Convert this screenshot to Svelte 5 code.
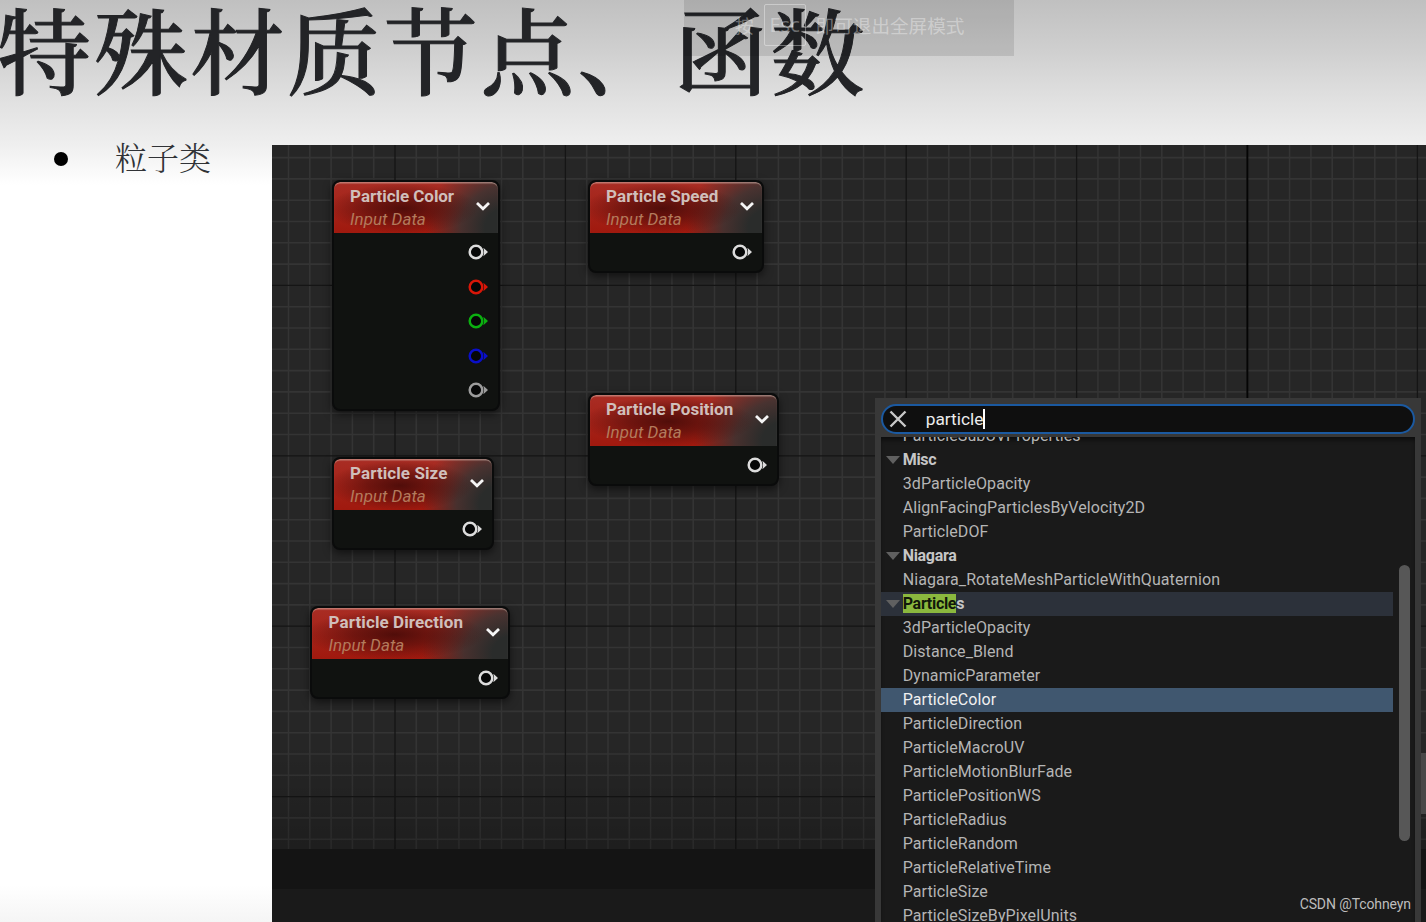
<script lang="ts">
	interface GraphNode {
		title: string;
		x: number;
		y: number;
		width: number;
		spacing: number;
		pins: string[];
	}

	interface Row {
		label: string;
		group?: boolean;
		match?: string;
		selected?: boolean;
	}

	const nodes: GraphNode[] = [
		{ title: 'Particle Color', x: 60, y: 35, width: 168, spacing: -0.05, pins: ['#dcdcdc', '#d81608', '#0bb010', '#0a0fc8', '#9c9c9c'] },
		{ title: 'Particle Speed', x: 316, y: 35, width: 176, spacing: 0.05, pins: ['#dcdcdc'] },
		{ title: 'Particle Position', x: 316, y: 248, width: 191, spacing: 0.03, pins: ['#dcdcdc'] },
		{ title: 'Particle Size', x: 60, y: 312, width: 162, spacing: 0.08, pins: ['#dcdcdc'] },
		{ title: 'Particle Direction', x: 38.5, y: 461, width: 199.5, spacing: 0.1, pins: ['#dcdcdc'] }
	];

	const rows: Row[] = [
		{ label: 'ParticleSubUVProperties' },
		{ label: 'Misc', group: true },
		{ label: '3dParticleOpacity' },
		{ label: 'AlignFacingParticlesByVelocity2D' },
		{ label: 'ParticleDOF' },
		{ label: 'Niagara', group: true },
		{ label: 'Niagara_RotateMeshParticleWithQuaternion' },
		{ label: 's', group: true, match: 'Particle' },
		{ label: '3dParticleOpacity' },
		{ label: 'Distance_Blend' },
		{ label: 'DynamicParameter' },
		{ label: 'ParticleColor', selected: true },
		{ label: 'ParticleDirection' },
		{ label: 'ParticleMacroUV' },
		{ label: 'ParticleMotionBlurFade' },
		{ label: 'ParticlePositionWS' },
		{ label: 'ParticleRadius' },
		{ label: 'ParticleRandom' },
		{ label: 'ParticleRelativeTime' },
		{ label: 'ParticleSize' },
		{ label: 'ParticleSizeByPixelUnits' }
	];

	// grid line positions inside the graph, every eighth line is a major one
	const step = 21.3;
	const cols = Array.from({ length: 54 }, (_, i) => ({ at: 16.5 + i * step, major: i % 8 === 5 }));
	const lines = Array.from({ length: 33 }, (_, i) => ({ at: 12.6 + i * step, major: i % 8 === 6 }));
</script>

<main class="slide">
	<h1>特殊材质节点、函数</h1>
	<div class="hint">
		<span>按</span>
		<kbd>Esc</kbd>
		<span>即可退出全屏模式</span>
	</div>

	<div class="body">
		<ul>
			<li><span>粒子类</span></li>
		</ul>

		<section class="editor">
			<div class="graph">
				<svg class="grid" width="1155" height="704" aria-hidden="true">
					{#each cols as c}
						{#if !c.major}<path d="M{c.at} 0V704" />{/if}
					{/each}
					{#each lines as l}
						{#if !l.major}<path d="M0 {l.at}H1155" />{/if}
					{/each}
					{#each cols as c}
						{#if c.major}<path class="major" d="M{c.at} 0V704" />{/if}
					{/each}
					{#each lines as l}
						{#if l.major}<path class="major" d="M0 {l.at}H1155" />{/if}
					{/each}
					<path class="axis" d="M975.5 0V704" />
				</svg>
				<div class="shade"></div>

				{#each nodes as node}
					<article class="node" style="left: {node.x}px; top: {node.y}px; width: {node.width}px">
						<header>
							<div class="titles">
								<h2 style="letter-spacing: {node.spacing}px">{node.title}</h2>
								<p>Input Data</p>
							</div>
							<svg class="chevron" width="16" height="12" viewBox="0 0 16 12" aria-hidden="true">
								<path d="M2 3 8 8.7 14 3" />
							</svg>
						</header>
						<div class="pins">
							{#each node.pins as color}
								<svg width="20" height="16" viewBox="0 0 20 16" aria-hidden="true">
									<circle cx="8" cy="8" r="6.3" fill="#060707" stroke={color} stroke-width="2.5" />
									<path d="M15.4 3.8 20 8l-4.6 4.2q1.2-4.2 0-8.4Z" fill={color} />
								</svg>
							{/each}
						</div>
					</article>
				{/each}
			</div>
			<div class="strip"></div>
			<div class="edge-button"></div>

			<div class="menu">
				<div class="search">
					<svg width="18" height="18" viewBox="0 0 18 18" aria-hidden="true">
						<path d="M1.5 1.5l15 15M16.5 1.5l-15 15" />
					</svg>
					<span class="query">particle</span>
					<i class="caret"></i>
				</div>
				<div class="list">
					<div class="rows">
						{#each rows as row}
							<div class="row" class:group={row.group} class:hovered={row.match} class:selected={row.selected}>
								<span class="arrow">
									{#if row.group}
										<svg width="14" height="8" viewBox="0 0 14 8" aria-hidden="true"><path d="M0 0h14L7 8Z" /></svg>
									{/if}
								</span>
								<span>{#if row.match}<mark>{row.match}</mark>{/if}{row.label}</span>
							</div>
						{/each}
					</div>
					<div class="scrollbar"></div>
				</div>
			</div>
		</section>
	</div>

	<div class="watermark">CSDN @Tcohneyn</div>
</main>

<style>
	:global(body) {
		background: #fff;
	}

	.slide {
		position: relative;
		width: 1426px;
		height: 922px;
		overflow: hidden;
		background: linear-gradient(#c0c0c0 0, #cfcfcf 50px, #dfdfdf 95px, #efefef 145px, #fff 185px, #fff 885px, #f5f5f5 922px);
		font-family: Roboto, 'Noto Sans CJK SC', sans-serif;
	}

	h1 {
		height: 145px;
		margin: 0 0 0 -3px;
		color: #232427;
		font: 500 94px/96px 'Noto Serif CJK SC', 'Noto Sans CJK SC', serif;
		letter-spacing: 2.7px;
		white-space: nowrap;
		-webkit-text-stroke: 1px #232427;
	}

	.hint {
		position: absolute;
		left: 684px;
		top: 0;
		display: flex;
		align-items: center;
		gap: 10px;
		width: 279px;
		height: 50px;
		padding: 0 0 6px 51px;
		background: rgba(0, 0, 0, 0.1);
		color: rgba(255, 255, 255, 0.36);
		font-size: 18.6px;
		white-space: nowrap;
	}

	.hint span {
		margin-top: -2px;
	}

	kbd {
		box-sizing: border-box;
		width: 42px;
		height: 42px;
		border: 1px solid rgba(255, 255, 255, 0.36);
		border-radius: 2px;
		font: 20px/40px 'Open Sans', sans-serif;
		text-align: center;
	}

	.body {
		display: flex;
		height: 777px;
	}

	ul {
		width: 271.6px;
		margin: 0;
		padding: 0;
		list-style: none;
	}

	li {
		display: flex;
		align-items: center;
		gap: 47px;
		height: 28px;
		padding-left: 54px;
		color: #303236;
		font: 300 32px/28px 'Noto Serif CJK SC', 'Noto Sans CJK SC', serif;
	}

	li span {
		margin-top: -7px;
	}

	li::before {
		content: '';
		width: 14px;
		height: 14px;
		border-radius: 50%;
		background: #000;
	}

	.editor {
		position: relative;
		flex: 1;
		overflow: hidden;
		background: #1a1a1a;
	}

	.graph {
		position: relative;
		height: 704px;
		overflow: hidden;
		background: #262626;
	}

	.grid {
		display: block;
	}

	.grid path {
		stroke: #343434;
		stroke-width: 1.6;
	}

	.grid .major {
		stroke: #151515;
		stroke-width: 1.3;
	}

	.grid .axis {
		stroke: #050505;
	}

	.shade {
		position: absolute;
		inset: 0;
		background: linear-gradient(transparent 85%, rgba(0, 0, 0, 0.22));
	}

	.strip {
		height: 40px;
		background: #141414;
	}

	.edge-button {
		position: absolute;
		right: 0;
		top: 608px;
		width: 5px;
		height: 61px;
		background: #484848;
	}

	.node {
		position: absolute;
		box-sizing: border-box;
		border: 2px solid #0a0b0b;
		border-radius: 8px;
		overflow: hidden;
		background: #101210;
		box-shadow: 0 3px 8px rgba(0, 0, 0, 0.55);
	}

	.node header {
		display: flex;
		justify-content: space-between;
		height: 51px;
		padding: 0 7px 0 16.5px;
		box-sizing: border-box;
		border-radius: 6px 6px 0 0;
		background:
			radial-gradient(ellipse 46% 25px at 42% 52%, rgba(60, 8, 6, 0.8), rgba(60, 8, 6, 0.5) 45%, transparent),
			radial-gradient(ellipse 48% 75px at 104% 90%, #2a2c2b 25%, rgba(56, 52, 51, 0.85) 55%, transparent),
			linear-gradient(#a92d24, #a0190e);
		box-shadow: inset 0 2px 1px -0.5px rgba(220, 200, 190, 0.5);
	}

	h2,
	.node p {
		margin: 0;
		font-size: 17px;
		line-height: 23px;
		white-space: nowrap;
	}

	h2 {
		padding-top: 3px;
		color: #d0bfbb;
		font-weight: 700;
	}

	.node p {
		color: #b37a5c;
		font-style: italic;
	}

	.chevron {
		margin-top: 18px;
		flex: none;
	}

	.chevron path {
		fill: none;
		stroke: #f5f5f5;
		stroke-width: 2.8;
	}

	.pins {
		display: flex;
		flex-direction: column;
		align-items: flex-end;
		gap: 18.6px;
		padding: 11px 9.4px 11px 0;
	}

	.menu {
		position: absolute;
		left: 603.6px;
		top: 253px;
		box-sizing: border-box;
		width: 546px;
		height: 530px;
		padding: 6px 6px 0;
		background: #383838;
	}

	.search {
		display: flex;
		align-items: center;
		box-sizing: border-box;
		height: 30px;
		padding-left: 5.5px;
		border: 2px solid #1b59a0;
		border-radius: 15px;
		background: #0f0f0f;
	}

	.search path {
		fill: none;
		stroke: #c8c8c8;
		stroke-width: 2.4;
	}

	.query {
		margin: -1px 0 0 19px;
		color: #ececec;
		font-size: 17.3px;
	}

	.caret {
		width: 1.5px;
		height: 20px;
		background: #fff;
	}

	.list {
		display: flex;
		justify-content: space-between;
		height: 490px;
		margin-top: 3px;
		overflow: hidden;
		background: #1a1a1a;
		box-shadow: inset 0 4px 4px -1px rgba(0, 0, 0, 0.5);
	}

	.rows {
		width: 512px;
		margin-top: -13px;
	}

	.row {
		display: flex;
		align-items: center;
		height: 24px;
		color: #b5b5b5;
		font-size: 16px;
		line-height: 22px;
		letter-spacing: 0.09px;
		white-space: nowrap;
	}

	.row.group {
		color: #c6c6c6;
		font-weight: 700;
		letter-spacing: -0.3px;
	}

	.row.hovered {
		background: #2c313a;
	}

	.row.selected {
		background: #40576f;
		color: #f0f0f0;
	}

	.arrow {
		display: flex;
		width: 17px;
		padding-left: 4.5px;
	}

	.arrow path {
		fill: #606060;
	}

	mark {
		background: #8bb83e;
		color: #12180a;
	}

	.scrollbar {
		width: 11px;
		height: 276px;
		margin: 128px 5px 0 0;
		border-radius: 6px;
		background: #575757;
	}

	.watermark {
		position: absolute;
		right: 15px;
		bottom: 8px;
		color: #bdbdbd;
		font-size: 14px;
		line-height: 20px;
		letter-spacing: -0.1px;
	}
</style>
